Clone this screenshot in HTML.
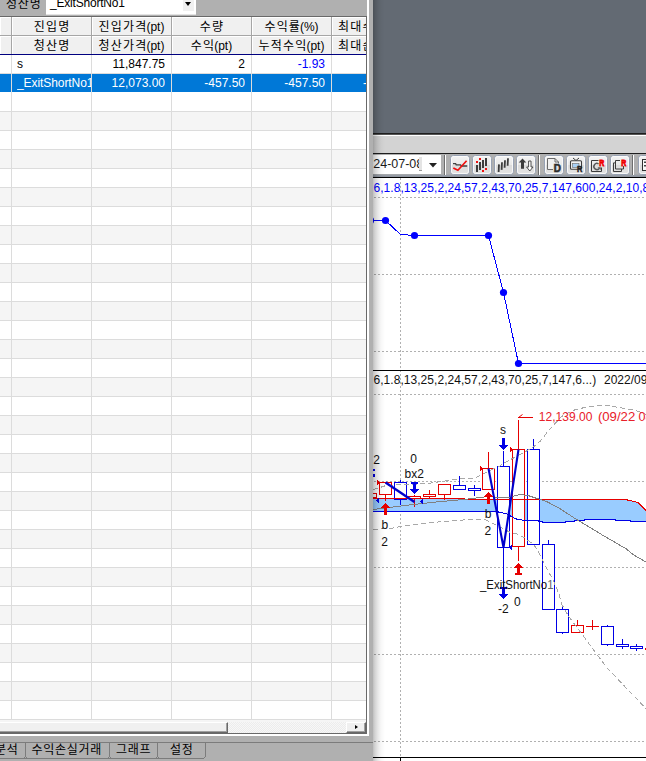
<!DOCTYPE html>
<html lang="ko">
<head>
<meta charset="utf-8">
<title>Trade list and chart</title>
<style>
html,body{margin:0;padding:0;}
body{width:646px;height:761px;overflow:hidden;background:#fff;position:relative;
 font-family:"Liberation Sans","Noto Sans CJK KR",sans-serif;font-size:12px;color:#000;}
.abs{position:absolute;}
#left{position:absolute;left:0;top:0;width:373px;height:761px;background:#b0b0b0;overflow:hidden;}
#grid{position:absolute;left:0;top:17px;width:366px;height:705px;overflow:hidden;
 background-color:#fff;}
#rows{position:absolute;left:0;top:38px;width:366px;height:667px;
 background-image:
  linear-gradient(to right,#dcdcdc 0,#dcdcdc 1px,transparent 1px),
  linear-gradient(to bottom,transparent 0,transparent 18px,#dcdcdc 18px,#dcdcdc 19px),
  linear-gradient(to bottom,#fff 0,#fff 19px,#f5f5f5 19px,#f5f5f5 38px);
 background-size:80px 19px,100% 19px,100% 38px;
 background-position:11px 0,0 0,0 0;
 background-repeat:repeat,repeat,repeat;}
.hd{position:absolute;height:18px;line-height:21px;background:#f0f0f0;text-align:center;
 border-right:1px solid #a6a6a6;border-bottom:1px solid #a6a6a6;box-sizing:content-box;
 box-shadow:inset 1px 1px 0 #fff;white-space:nowrap;overflow:hidden;font-size:12px;}
.cell{position:absolute;height:18px;line-height:18px;white-space:nowrap;overflow:hidden;font-size:12px;}
.k{letter-spacing:1.2px;margin-right:-1.2px;}
.r{text-align:right;}
.sel{position:absolute;left:0;top:19px;width:366px;height:18px;background:#0078d7;border-bottom:1px solid #fff;}
.w{color:#fff;}
.b{color:#0000ff;}
.sb{background:#f0f0f0;border-top:1px solid #fff;border-right:1px solid #696969;border-bottom:1px solid #696969;box-shadow:inset -1px -1px 0 #a0a0a0;}
.tab .k{letter-spacing:0.7px;}
.tab{position:absolute;top:743px;height:15px;line-height:14px;font-size:12px;white-space:nowrap;}
</style>
</head>
<body>
<!-- ================= LEFT PANEL ================= -->
<div id="left">
  <!-- top filter bar -->
  <div class="abs" style="left:6px;top:-4px;font-size:12px;line-height:16px;letter-spacing:0.8px;">청산명</div>
  <div class="abs" style="left:46px;top:0;width:150px;height:14px;background:#fff;"></div>
  <div class="abs" style="left:50px;top:-4.6px;font-size:12px;line-height:16px;letter-spacing:-0.2px;">_ExitShortNo1</div>
  <div class="abs" style="left:183px;top:0;width:11px;height:11px;background:#f0f0f0;"></div>
  <div class="abs" style="left:185px;top:2px;width:0;height:0;border-left:3.5px solid transparent;border-right:3.5px solid transparent;border-top:4px solid #000;"></div>
  <div class="abs" style="left:46px;top:14px;width:150px;height:1px;background:#e3e3e3;"></div>
  <div class="abs" style="left:0;top:16px;width:367px;height:1px;background:#696969;"></div>

  <div id="grid">
    <!-- header row 1 -->
    <div class="hd" style="left:0;top:0;width:11px;"></div>
    <div class="hd" style="left:12px;top:0;width:79px;"><span class="k">진입명</span></div>
    <div class="hd" style="left:92px;top:0;width:79px;"><span class="k">진입가격</span>(pt)</div>
    <div class="hd" style="left:172px;top:0;width:79px;"><span class="k">수량</span></div>
    <div class="hd" style="left:252px;top:0;width:79px;"><span class="k">수익률</span>(%)</div>
    <div class="hd" style="left:332px;top:0;width:79px;text-align:left;text-indent:6px;"><span class="k">최대수익</span></div>
    <!-- header row 2 -->
    <div class="hd" style="left:0;top:19px;width:11px;"></div>
    <div class="hd" style="left:12px;top:19px;width:79px;"><span class="k">청산명</span></div>
    <div class="hd" style="left:92px;top:19px;width:79px;"><span class="k">청산가격</span>(pt)</div>
    <div class="hd" style="left:172px;top:19px;width:79px;"><span class="k">수익</span>(pt)</div>
    <div class="hd" style="left:252px;top:19px;width:79px;"><span class="k">누적수익</span>(pt)</div>
    <div class="hd" style="left:332px;top:19px;width:79px;text-align:left;text-indent:6px;"><span class="k">최대손실</span></div>
    <div class="abs" style="left:0;top:37px;width:366px;height:1px;background:#000080;"></div>
    <div id="rows">
      <div class="sel"></div>
      <div class="abs" style="left:11px;top:19px;width:1px;height:19px;background:#dcdcdc;"></div>
      <div class="abs" style="left:91px;top:19px;width:1px;height:19px;background:#dcdcdc;"></div>
      <div class="abs" style="left:171px;top:19px;width:1px;height:19px;background:#dcdcdc;"></div>
      <div class="abs" style="left:251px;top:19px;width:1px;height:19px;background:#dcdcdc;"></div>
      <div class="abs" style="left:331px;top:19px;width:1px;height:19px;background:#dcdcdc;"></div>
      <div class="cell" style="left:17px;top:0;width:74px;">s</div>
      <div class="cell r" style="left:92px;top:0;width:73px;">11,847.75</div>
      <div class="cell r" style="left:172px;top:0;width:73px;">2</div>
      <div class="cell r b" style="left:252px;top:0;width:73px;">-1.93</div>
      <div class="cell w" style="left:17px;top:19px;width:74px;letter-spacing:-0.08px;">_ExitShortNo1</div>
      <div class="cell r w" style="left:92px;top:19px;width:73px;">12,073.00</div>
      <div class="cell r w" style="left:172px;top:19px;width:73px;">-457.50</div>
      <div class="cell r w" style="left:252px;top:19px;width:73px;">-457.50</div>
      <div class="cell w" style="left:363px;top:19px;width:3px;">-</div>
    </div>
  </div>

  <!-- horizontal scrollbar -->
  <div class="abs" style="left:0;top:720px;width:366px;height:2px;background:#f5f5f5;"></div>
  <div class="abs" style="left:0;top:722px;width:366px;height:11px;background-color:#f7f7f7;background-image:linear-gradient(45deg,#ececec 25%,transparent 25%,transparent 75%,#ececec 75%),linear-gradient(45deg,#ececec 25%,transparent 25%,transparent 75%,#ececec 75%);background-size:2px 2px;background-position:0 0,1px 1px;"></div>
  <div class="abs sb" style="left:0;top:722px;width:227px;height:9px;"></div>
  <div class="abs sb" style="left:346px;top:722px;height:9px;border-left:1px solid #fff;width:18px;"></div>
  <div class="abs" style="left:355px;top:725px;width:0;height:0;border-top:2.5px solid transparent;border-bottom:2.5px solid transparent;border-left:3px solid #000;"></div>

  <!-- sunken frame edges -->
  <div class="abs" style="left:366px;top:16px;width:1px;height:718px;background:#696969;"></div>
  <div class="abs" style="left:367px;top:0;width:2px;height:736px;background:#fff;"></div>
  <div class="abs" style="left:0;top:733px;width:367px;height:1px;background:#696969;"></div>
  <div class="abs" style="left:0;top:734px;width:369px;height:2px;background:#fff;"></div>
  <div class="abs" style="left:369px;top:0;width:4px;height:761px;background:#b0b0b0;"></div>
  <div class="abs" style="left:0;top:736px;width:373px;height:6px;background:#b0b0b0;"></div>
  <div class="abs" style="left:0;top:742px;width:373px;height:1px;background:#7c7c7c;"></div>

  <!-- tabs -->
  <div class="tab" style="left:-5px;"><span class="k">분석</span></div>
  <div class="tab" style="left:31.5px;"><span class="k">수익손실거래</span></div>
  <div class="tab" style="left:116px;"><span class="k">그래프</span></div>
  <div class="tab" style="left:170px;"><span class="k">설정</span></div>
  <svg class="abs" style="left:0;top:742px;" width="373" height="19" viewBox="0 742 373 19" shape-rendering="crispEdges">
    <g fill="#7c7c7c">
      <rect x="0" y="758" width="204" height="1"/>
      <rect x="25" y="743" width="1" height="14"/><rect x="24" y="757" width="1" height="1"/><rect x="26" y="757" width="1" height="1"/>
      <rect x="109" y="743" width="1" height="14"/><rect x="108" y="757" width="1" height="1"/><rect x="110" y="757" width="1" height="1"/>
      <rect x="157" y="743" width="1" height="14"/><rect x="156" y="757" width="1" height="1"/><rect x="158" y="757" width="1" height="1"/>
      <rect x="205" y="743" width="1" height="14"/><rect x="204" y="757" width="1" height="1"/>
    </g>
  </svg>
</div>

<!-- ================= RIGHT PANEL ================= -->
<div id="right" class="abs" style="left:373px;top:0;width:273px;height:761px;background:#fff;overflow:hidden;">
  <div class="abs" style="left:0;top:0;width:273px;height:133px;background:#636a73;"></div>
  <div class="abs" style="left:0;top:133px;width:273px;height:1px;background:#1e1e1e;"></div>
  <div class="abs" style="left:0;top:134px;width:273px;height:1px;background:#555;"></div>
  <div class="abs" style="left:0;top:135px;width:273px;height:1px;background:#fff;"></div>
  <div class="abs" style="left:0;top:136px;width:273px;height:17px;background:#d3d3d3;"></div>
  <div class="abs" style="left:0;top:153px;width:273px;height:1px;background:#1e1e1e;"></div>
  <div id="tb" class="abs" style="left:0;top:154px;width:273px;height:23px;background:linear-gradient(to bottom,#b0b0b0 0,#b0b0b0 20px,#9aa0a8 21px,#8c929c 23px);"></div>
  <div class="abs" style="left:0;top:177px;width:273px;height:1px;background:#000;"></div>
  <svg class="abs" style="left:0;top:154px;" width="273" height="23" viewBox="373 154 273 23" font-family="'Liberation Sans',sans-serif">
<defs><linearGradient id="bg" x1="0" y1="0" x2="0" y2="1"><stop offset="0" stop-color="#f4f4f4"/><stop offset="0.48" stop-color="#e9e9e9"/><stop offset="0.52" stop-color="#dcdcdc"/><stop offset="1" stop-color="#e4e4e4"/></linearGradient></defs>
<rect x="373" y="155" width="68" height="19" fill="#fff"/>
<text x="373.3" y="168.4" font-size="13.5" fill="#1a1a1a" textLength="43" lengthAdjust="spacingAndGlyphs">24-07-0</text>
<text x="416.2" y="168.4" font-size="13.5" fill="#1a1a1a">8</text>
<rect x="419" y="156" width="22" height="17" fill="#fff"/>
<rect x="419" y="157" width="3" height="14" fill="#e4e4e4"/><rect x="419" y="170" width="3" height="1" fill="#9a9a9a"/>
<polygon points="429,163 437,163 433,167.5" fill="#222"/>
<rect x="444" y="155" width="1" height="20" fill="#6e6e6e"/><rect x="445" y="155" width="1" height="20" fill="#fff"/>
<rect x="450.5" y="155.5" width="19" height="19" rx="3" ry="3" fill="url(#bg)" stroke="#98a2b4" stroke-width="1"/><rect x="451.5" y="156.5" width="17" height="17" rx="2" ry="2" fill="none" stroke="#fcfcfc" stroke-width="1" opacity="0.85"/>
<polyline points="453,163.6 455.6,163.6 456.2,164.8 460.6,164.8 461.2,166 467.2,166" fill="none" stroke="#404040" stroke-width="1.3"/>
<polyline points="453.3,167.9 457.9,170.3 466.6,160.7" fill="none" stroke="#f01010" stroke-width="1.7"/>
<rect x="472.5" y="155.5" width="19" height="19" rx="3" ry="3" fill="url(#bg)" stroke="#98a2b4" stroke-width="1"/><rect x="473.5" y="156.5" width="17" height="17" rx="2" ry="2" fill="none" stroke="#fcfcfc" stroke-width="1" opacity="0.85"/>
<rect x="476" y="165" width="2" height="7" fill="#3c3c3c"/>
<rect x="479" y="162" width="2" height="8" fill="#3c3c3c"/>
<rect x="482" y="160" width="2" height="8" fill="#3c3c3c"/>
<rect x="485" y="158" width="2" height="8" fill="#3c3c3c"/>
<rect x="476" y="161" width="2" height="2" fill="#f01010"/>
<rect x="479" y="158" width="2" height="2" fill="#f01010"/>
<rect x="482" y="170" width="2" height="2" fill="#f01010"/>
<rect x="485" y="168" width="2" height="2" fill="#f01010"/>
<rect x="494.5" y="155.5" width="19" height="19" rx="3" ry="3" fill="url(#bg)" stroke="#98a2b4" stroke-width="1"/><rect x="495.5" y="156.5" width="17" height="17" rx="2" ry="2" fill="none" stroke="#fcfcfc" stroke-width="1" opacity="0.85"/>
<line x1="498.6" y1="172.0" x2="499.0" y2="164.4" stroke="#3c3c3c" stroke-width="1.8"/>
<line x1="501.6" y1="169.9" x2="502.0" y2="162.3" stroke="#3c3c3c" stroke-width="1.8"/>
<line x1="504.6" y1="167.79999999999998" x2="505.0" y2="160.2" stroke="#3c3c3c" stroke-width="1.8"/>
<line x1="507.6" y1="165.79999999999998" x2="508.0" y2="158.2" stroke="#3c3c3c" stroke-width="1.8"/>
<rect x="516.5" y="155.5" width="19" height="19" rx="3" ry="3" fill="url(#bg)" stroke="#98a2b4" stroke-width="1"/><rect x="517.5" y="156.5" width="17" height="17" rx="2" ry="2" fill="none" stroke="#fcfcfc" stroke-width="1" opacity="0.85"/>
<polygon points="522.5,158.5 526.3,162.6 524,162.6 524,168.8 521,168.8 521,162.6 518.7,162.6" fill="#3c3c3c"/>
<polygon points="528.6,161 531,161 531,167 533,167 529.8,171 526.6,167 528.6,167" fill="#fff" stroke="#3c3c3c" stroke-width="0.9"/>
<rect x="538" y="155" width="1" height="20" fill="#6e6e6e"/><rect x="539" y="155" width="1" height="20" fill="#fff"/>
<rect x="544.5" y="155.5" width="19" height="19" rx="3" ry="3" fill="url(#bg)" stroke="#98a2b4" stroke-width="1"/><rect x="545.5" y="156.5" width="17" height="17" rx="2" ry="2" fill="none" stroke="#fcfcfc" stroke-width="1" opacity="0.85"/>
<polygon points="547.5,158.5 555,158.5 558.5,162 558.5,169.5 547.5,169.5" fill="#f0f0f0" stroke="#6a6a6a" stroke-width="1"/>
<polyline points="555,158.5 555,162 558.5,162" fill="none" stroke="#6a6a6a" stroke-width="1"/>
<rect x="553" y="163.5" width="6" height="6.5" fill="#e2e2e2"/><text x="553.8" y="171.6" font-size="10.4" font-weight="bold" fill="#2c2c2c" stroke="#2c2c2c" stroke-width="0.5" textLength="7.2" lengthAdjust="spacingAndGlyphs">D</text>
<rect x="566.5" y="155.5" width="19" height="19" rx="3" ry="3" fill="url(#bg)" stroke="#98a2b4" stroke-width="1"/><rect x="567.5" y="156.5" width="17" height="17" rx="2" ry="2" fill="none" stroke="#fcfcfc" stroke-width="1" opacity="0.85"/>
<polyline points="573,158 576,160.5 579,158" fill="none" stroke="#3c3c3c" stroke-width="1"/>
<rect x="570.5" y="160.8" width="11" height="8.5" rx="1" fill="#f4f4f4" stroke="#3c3c3c" stroke-width="1.1"/>
<rect x="572.5" y="163.5" width="6.5" height="4" fill="#a9d1f7" stroke="#666" stroke-width="0.6"/>
<text x="577" y="171.6" font-size="8.8" font-weight="bold" fill="#222" stroke="#222" stroke-width="0.5" textLength="5.3" lengthAdjust="spacingAndGlyphs">R</text>
<rect x="588.5" y="155.5" width="19" height="19" rx="3" ry="3" fill="url(#bg)" stroke="#98a2b4" stroke-width="1"/><rect x="589.5" y="156.5" width="17" height="17" rx="2" ry="2" fill="none" stroke="#fcfcfc" stroke-width="1" opacity="0.85"/>
<polyline points="598.5,160.5 591.5,160.5 591.5,171.5 601.5,171.5 601.5,167.5" fill="none" stroke="#3c3c3c" stroke-width="1"/>
<path d="M598.6 164 A3 3 0 1 0 599.2 168.4" fill="none" stroke="#5a5a5a" stroke-width="1.5"/>
<polygon points="597.4,167.2 600.8,167.2 600.8,170" fill="#5a5a5a"/>
<text x="599.3" y="166" font-size="9.7" font-weight="bold" fill="#f00000" stroke="#f00000" stroke-width="0.8" textLength="5" lengthAdjust="spacingAndGlyphs">R</text>
<rect x="610.5" y="155.5" width="19" height="19" rx="3" ry="3" fill="url(#bg)" stroke="#98a2b4" stroke-width="1"/><rect x="611.5" y="156.5" width="17" height="17" rx="2" ry="2" fill="none" stroke="#fcfcfc" stroke-width="1" opacity="0.85"/>
<polyline points="620,160.5 615.5,160.5 615.5,169 623.5,169 623.5,166" fill="none" stroke="#3c3c3c" stroke-width="1"/>
<polyline points="615.5,162.9 613.5,162.9 613.5,171.5 621.5,171.5 621.5,169" fill="none" stroke="#3c3c3c" stroke-width="1"/>
<text x="621.3" y="166" font-size="9.7" font-weight="bold" fill="#f00000" stroke="#f00000" stroke-width="0.8" textLength="5" lengthAdjust="spacingAndGlyphs">R</text>
<rect x="632" y="155" width="1" height="20" fill="#6e6e6e"/><rect x="633" y="155" width="1" height="20" fill="#fff"/>
<rect x="638.5" y="155.5" width="19" height="19" rx="3" ry="3" fill="url(#bg)" stroke="#98a2b4" stroke-width="1"/><rect x="639.5" y="156.5" width="17" height="17" rx="2" ry="2" fill="none" stroke="#fcfcfc" stroke-width="1" opacity="0.85"/>
<rect x="642.5" y="159.5" width="8" height="11" fill="#f8f8f8" stroke="#303030" stroke-width="1"/>
<rect x="644" y="161.5" width="4" height="1.5" fill="#444"/><rect x="644" y="165" width="4" height="1.5" fill="#444"/>
</svg>
  <svg class="abs" style="left:0;top:0;" width="273" height="761" viewBox="373 0 273 761" font-family="'Liberation Sans','Noto Sans CJK KR',sans-serif" font-size="12">
<g shape-rendering="crispEdges">
<line x1="374" x2="646" y1="197.5" y2="197.5" stroke="#b0b0b0" stroke-width="1" stroke-dasharray="2 2"/>
<line x1="374" x2="646" y1="274.5" y2="274.5" stroke="#b0b0b0" stroke-width="1" stroke-dasharray="2 2"/>
<line x1="374" x2="646" y1="351.5" y2="351.5" stroke="#b0b0b0" stroke-width="1" stroke-dasharray="2 2"/>
<line x1="374" x2="646" y1="394.5" y2="394.5" stroke="#b0b0b0" stroke-width="1" stroke-dasharray="2 2"/>
<line x1="374" x2="646" y1="481.5" y2="481.5" stroke="#b0b0b0" stroke-width="1" stroke-dasharray="2 2"/>
<line x1="374" x2="646" y1="567.5" y2="567.5" stroke="#b0b0b0" stroke-width="1" stroke-dasharray="2 2"/>
<line x1="374" x2="646" y1="654.5" y2="654.5" stroke="#b0b0b0" stroke-width="1" stroke-dasharray="2 2"/>
<line x1="374" x2="646" y1="741.5" y2="741.5" stroke="#b0b0b0" stroke-width="1" stroke-dasharray="2 2"/>
<line x1="400.5" x2="400.5" y1="178" y2="757" stroke="#b0b0b0" stroke-width="1" stroke-dasharray="2 2"/>
<rect x="373" y="370" width="273" height="1" fill="#000"/>
<rect x="373" y="757" width="273" height="1" fill="#000"/>
<rect x="400" y="758" width="1" height="3" fill="#000"/>
<polyline points="373,220.5 385.5,220.5 400.5,234.5 407.5,234.5 408.5,235.5 488.5,235.5 503.5,292.5 518.5,363.5 646,363.5" fill="none" stroke="#0000ff" stroke-width="1"/>
</g>
<circle cx="370.5" cy="220.5" r="3.6" fill="#0000ff"/>
<circle cx="385.5" cy="220.5" r="3.6" fill="#0000ff"/>
<circle cx="414.5" cy="235.5" r="3.6" fill="#0000ff"/>
<circle cx="488.5" cy="235.5" r="3.6" fill="#0000ff"/>
<circle cx="503.5" cy="292.5" r="3.6" fill="#0000ff"/>
<circle cx="518.5" cy="363.5" r="3.6" fill="#0000ff"/>
<text x="373.5" y="192" fill="#0000ff" font-size="12" letter-spacing="0.045">6,1.8,13,25,2,24,57,2,43,70,25,7,147,600,24,2,10,8,30</text>
<text x="373.5" y="384" fill="#111" font-size="12" letter-spacing="0.045">6,1.8,13,25,2,24,57,2,43,70,25,7,147,6...)</text>
<text x="604" y="384" fill="#111" font-size="12">2022/09/22</text>
<g shape-rendering="crispEdges">
<polygon points="373,498 464,498 464,499 625,499 630,500 634,501 638,502 640,504 643,507 646,510 646,521.5 630,521.5 630,520.5 615,520.5 615,519.5 585,519.5 584,520.5 575,520.5 574,521.5 566,521.5 565,522.5 545,522.5 540,521.5 537,520.5 526,520.5 518,519.5 515,518.5 512,516.5 509,515.5 506,513.5 500,512.5 497,511.5 373,511.5" fill="#99ccff"/>
<rect x="364.5" y="493.5" width="12" height="4" fill="#fff" stroke="#e60000" stroke-width="1"/>
<rect x="385" y="495" width="1" height="6" fill="#e60000"/><rect x="379.5" y="482.5" width="12" height="12" fill="#fff" stroke="#e60000" stroke-width="1"/>
<rect x="400" y="480" width="1" height="2" fill="#0000e6"/><rect x="400" y="500" width="1" height="5" fill="#0000e6"/><rect x="394.5" y="482.5" width="12" height="17" fill="#fff" stroke="#0000e6" stroke-width="1"/>
<rect x="414" y="495" width="1" height="1" fill="#e60000"/><rect x="414" y="499" width="1" height="8" fill="#e60000"/><rect x="408.5" y="496.5" width="12" height="2" fill="#fff" stroke="#e60000" stroke-width="1"/>
<rect x="429" y="490" width="1" height="4" fill="#e60000"/><rect x="429" y="497" width="1" height="2" fill="#e60000"/><rect x="423.5" y="494.5" width="12" height="2" fill="#fff" stroke="#e60000" stroke-width="1"/>
<rect x="444" y="495" width="1" height="5" fill="#e60000"/><rect x="438.5" y="484.5" width="12" height="10" fill="#fff" stroke="#e60000" stroke-width="1"/>
<rect x="459" y="476" width="1" height="9" fill="#0000e6"/><rect x="453.5" y="485.5" width="12" height="4" fill="#fff" stroke="#0000e6" stroke-width="1"/>
<rect x="474" y="485" width="1" height="3" fill="#0000e6"/><rect x="474" y="491" width="1" height="5" fill="#0000e6"/><rect x="468.5" y="488.5" width="12" height="2" fill="#fff" stroke="#0000e6" stroke-width="1"/>
<rect x="488" y="452" width="1" height="16" fill="#e60000"/><rect x="482.5" y="468.5" width="12" height="21" fill="#fff" stroke="#e60000" stroke-width="1"/>
<rect x="503" y="451" width="1" height="15" fill="#0000e6"/><rect x="503" y="548" width="1" height="41" fill="#0000e6"/><rect x="497.5" y="466.5" width="12" height="81" fill="#fff" stroke="#0000e6" stroke-width="1"/>
<rect x="518" y="420" width="1" height="29" fill="#e60000"/><rect x="518" y="547" width="1" height="14" fill="#e60000"/><rect x="512.5" y="449.5" width="12" height="97" fill="#fff" stroke="#e60000" stroke-width="1"/>
<rect x="533" y="439" width="1" height="10" fill="#0000e6"/><rect x="527.5" y="449.5" width="12" height="95" fill="#fff" stroke="#0000e6" stroke-width="1"/>
<rect x="548" y="540" width="1" height="4" fill="#0000e6"/><rect x="542.5" y="544.5" width="12" height="65" fill="#fff" stroke="#0000e6" stroke-width="1"/>
<rect x="562" y="605" width="1" height="4" fill="#0000e6"/><rect x="562" y="633" width="1" height="1" fill="#0000e6"/><rect x="556.5" y="609.5" width="12" height="23" fill="#fff" stroke="#0000e6" stroke-width="1"/>
<rect x="577" y="620" width="1" height="5" fill="#e60000"/><rect x="571.5" y="625.5" width="12" height="7" fill="#fff" stroke="#e60000" stroke-width="1"/>
<rect x="586" y="626" width="13" height="1" fill="#e60000"/><rect x="592" y="620" width="1" height="10" fill="#e60000"/>
<rect x="607" y="625" width="1" height="1" fill="#0000e6"/><rect x="607" y="645" width="1" height="1" fill="#0000e6"/><rect x="601.5" y="626.5" width="12" height="18" fill="#fff" stroke="#0000e6" stroke-width="1"/>
<rect x="622" y="639" width="1" height="5" fill="#0000e6"/><rect x="622" y="647" width="1" height="2" fill="#0000e6"/><rect x="616.5" y="644.5" width="12" height="2" fill="#fff" stroke="#0000e6" stroke-width="1"/>
<rect x="636" y="644" width="1" height="2" fill="#0000e6"/><rect x="636" y="649" width="1" height="2" fill="#0000e6"/><rect x="630.5" y="646.5" width="12" height="2" fill="#fff" stroke="#0000e6" stroke-width="1"/>
<rect x="645" y="648" width="1" height="2" fill="#e60000"/>
<polyline points="373,498.5 464,498.5 464,499.5 625,499.5 630,500.5 634,501.5 638,502.5 640,504.5 643,507.5 646,510.5" fill="none" stroke="#e60000" stroke-width="1"/>
<polyline points="373,511.5 497,511.5 500,512.5 506,513.5 509,515.5 512,516.5 515,518.5 518,519.5 526,520.5 537,520.5 540,521.5 545,522.5 565,522.5 566,521.5 574,521.5 575,520.5 584,520.5 585,519.5 615,519.5 615,520.5 630,520.5 630,521.5 646,521.5" fill="none" stroke="#0000e6" stroke-width="1"/>
<polyline points="373,509.5 413,504.5 441,501.5 464,499.5 480,497.5 488,496.5 497,497.5 505,497.8 511,497 519.5,494.5 528,495.5 537,498.5 546.5,501.5 559,508 575,518.5 604,536 626.5,549 633,554.5 646,562" fill="none" stroke="#808080" stroke-width="1"/>
<polyline points="373,489.5 380,487.5 386,485.5 395,485 411,484.8 420,484 428,483.5 435,482.5 440,481.5 450,480.5 460,478.5 475,478 482,474.5 490,470.5 499,466.5 505,462.5 512.5,458.5 525,452 534,446.5 540.5,441 548.5,430.5 555.5,423 561.5,416.5 572.5,410.5 584.5,407.5 597,405.5 608,405.5 619,407.5 636,410.5 646,414.5" fill="none" stroke="#a8a8a8" stroke-width="1" stroke-dasharray="5 3"/>
<polyline points="373,529.5 390,528.5 398,527 400,526.5 420,524 440,521.8 470,519.5 480,519 486,519.8 493,523.5 499,526.5 511,532.8 518,534.3 525,538 534,545 540.5,555.5 546.5,568 553,580 559,594 561.5,604 569,617 583,635.5 595.5,652.5 608,669 644,706.5 650,713" fill="none" stroke="#a8a8a8" stroke-width="1" stroke-dasharray="5 3"/>
</g>
<polyline points="385.5,482.5 414.5,502" fill="none" stroke="#0000cc" stroke-width="2.4"/>
<polyline points="488.5,468.5 503.5,547.5 518.5,449.5" fill="none" stroke="#0000cc" stroke-width="2.1" stroke-linejoin="miter"/>
<g shape-rendering="crispEdges">
<rect x="377" y="480" width="1" height="5" fill="#e60000"/><rect x="378" y="481" width="1" height="3" fill="#e60000"/><rect x="379" y="482" width="1" height="1" fill="#e60000"/>
<rect x="480" y="466" width="1" height="5" fill="#e60000"/><rect x="481" y="467" width="1" height="3" fill="#e60000"/><rect x="482" y="468" width="1" height="1" fill="#e60000"/>
<rect x="510" y="447" width="1" height="5" fill="#e60000"/><rect x="511" y="448" width="1" height="3" fill="#e60000"/><rect x="512" y="449" width="1" height="1" fill="#e60000"/>
<rect x="378" y="498" width="1" height="5" fill="#0000e6"/><rect x="377" y="499" width="1" height="3" fill="#0000e6"/><rect x="376" y="500" width="1" height="1" fill="#0000e6"/>
<rect x="422" y="499" width="1" height="5" fill="#0000e6"/><rect x="421" y="500" width="1" height="3" fill="#0000e6"/><rect x="420" y="501" width="1" height="1" fill="#0000e6"/>
<rect x="511" y="545" width="1" height="5" fill="#0000e6"/><rect x="510" y="546" width="1" height="3" fill="#0000e6"/><rect x="509" y="547" width="1" height="1" fill="#0000e6"/>
<rect x="373" y="469" width="1.5" height="2" fill="#0000e6"/><rect x="373" y="474" width="1.5" height="3" fill="#0000e6"/>
<rect x="385" y="503" width="1" height="1" fill="#e60000"/><rect x="384" y="504" width="3" height="1" fill="#e60000"/><rect x="383" y="505" width="5" height="1" fill="#e60000"/><rect x="382" y="506" width="7" height="1" fill="#e60000"/><rect x="381" y="507" width="9" height="1" fill="#e60000"/><rect x="384" y="508" width="3" height="7" fill="#e60000"/>
<rect x="411" y="482" width="7" height="2" fill="#0000e6"/><rect x="413" y="484" width="3" height="5" fill="#0000e6"/><rect x="410" y="489" width="9" height="1" fill="#0000e6"/><rect x="411" y="490" width="7" height="1" fill="#0000e6"/><rect x="412" y="491" width="5" height="1" fill="#0000e6"/><rect x="413" y="492" width="3" height="1" fill="#0000e6"/><rect x="414" y="493" width="1" height="1" fill="#0000e6"/>
<rect x="488" y="492" width="1" height="1" fill="#e60000"/><rect x="487" y="493" width="3" height="1" fill="#e60000"/><rect x="486" y="494" width="5" height="1" fill="#e60000"/><rect x="485" y="495" width="7" height="1" fill="#e60000"/><rect x="484" y="496" width="9" height="1" fill="#e60000"/><rect x="487" y="497" width="3" height="7" fill="#e60000"/>
<rect x="502" y="438" width="3" height="7" fill="#0000e6"/><rect x="499" y="445" width="9" height="1" fill="#0000e6"/><rect x="500" y="446" width="7" height="1" fill="#0000e6"/><rect x="501" y="447" width="5" height="1" fill="#0000e6"/><rect x="502" y="448" width="3" height="1" fill="#0000e6"/><rect x="503" y="449" width="1" height="1" fill="#0000e6"/>
<rect x="518" y="563" width="1" height="1" fill="#e60000"/><rect x="517" y="564" width="3" height="1" fill="#e60000"/><rect x="516" y="565" width="5" height="1" fill="#e60000"/><rect x="515" y="566" width="7" height="1" fill="#e60000"/><rect x="514" y="567" width="9" height="1" fill="#e60000"/><rect x="517" y="568" width="3" height="5" fill="#e60000"/><rect x="515" y="573" width="7" height="2" fill="#e60000"/>
<rect x="500" y="587" width="7" height="2" fill="#0000e6"/><rect x="502" y="589" width="3" height="5" fill="#0000e6"/><rect x="499" y="594" width="9" height="1" fill="#0000e6"/><rect x="500" y="595" width="7" height="1" fill="#0000e6"/><rect x="501" y="596" width="5" height="1" fill="#0000e6"/><rect x="502" y="597" width="3" height="1" fill="#0000e6"/><rect x="503" y="598" width="1" height="1" fill="#0000e6"/>
<rect x="518" y="417" width="15" height="1" fill="#e60000"/>
</g>
<polyline points="518.5,417.5 522.5,414.5" fill="none" stroke="#e60000" stroke-width="1"/>
<text x="373.3" y="464" fill="#111" font-size="12">2</text>
<text x="410.3" y="463" fill="#111" font-size="12">0</text>
<text x="404.5" y="478" fill="#111" font-size="12">bx2</text>
<text x="381.5" y="528.5" fill="#111" font-size="12">b</text>
<text x="381.3" y="545.5" fill="#111" font-size="12">2</text>
<text x="500" y="434" fill="#111" font-size="12">s</text>
<text x="484.8" y="517.5" fill="#111" font-size="12">b</text>
<text x="484.5" y="535" fill="#111" font-size="12">2</text>
<text x="480" y="589" fill="#111" font-size="12" textLength="73.5" lengthAdjust="spacingAndGlyphs">_ExitShortNo<tspan fill="#666">1</tspan></text>
<text x="514" y="606" fill="#111" font-size="12">0</text>
<text x="498" y="613" fill="#111" font-size="12">-2</text>
<text x="538.8" y="421" fill="#e8202a" font-size="12.6" textLength="53.6" lengthAdjust="spacingAndGlyphs">12,139.00</text>
<text x="597.9" y="421" fill="#e8202a" font-size="12.6" textLength="37.4" lengthAdjust="spacingAndGlyphs">(09/22</text>
<text x="638.6" y="421" fill="#e8202a" font-size="12.6">08:45)</text>
</svg>
  <!-- drop shadow of the left window -->
  <div class="abs" style="left:0;top:0;width:12px;height:761px;background:linear-gradient(to right,rgba(0,0,0,0.25) 0,rgba(0,0,0,0.17) 2px,rgba(0,0,0,0.09) 5px,rgba(0,0,0,0.03) 8px,rgba(0,0,0,0) 12px);"></div>
</div>
</body>
</html>
